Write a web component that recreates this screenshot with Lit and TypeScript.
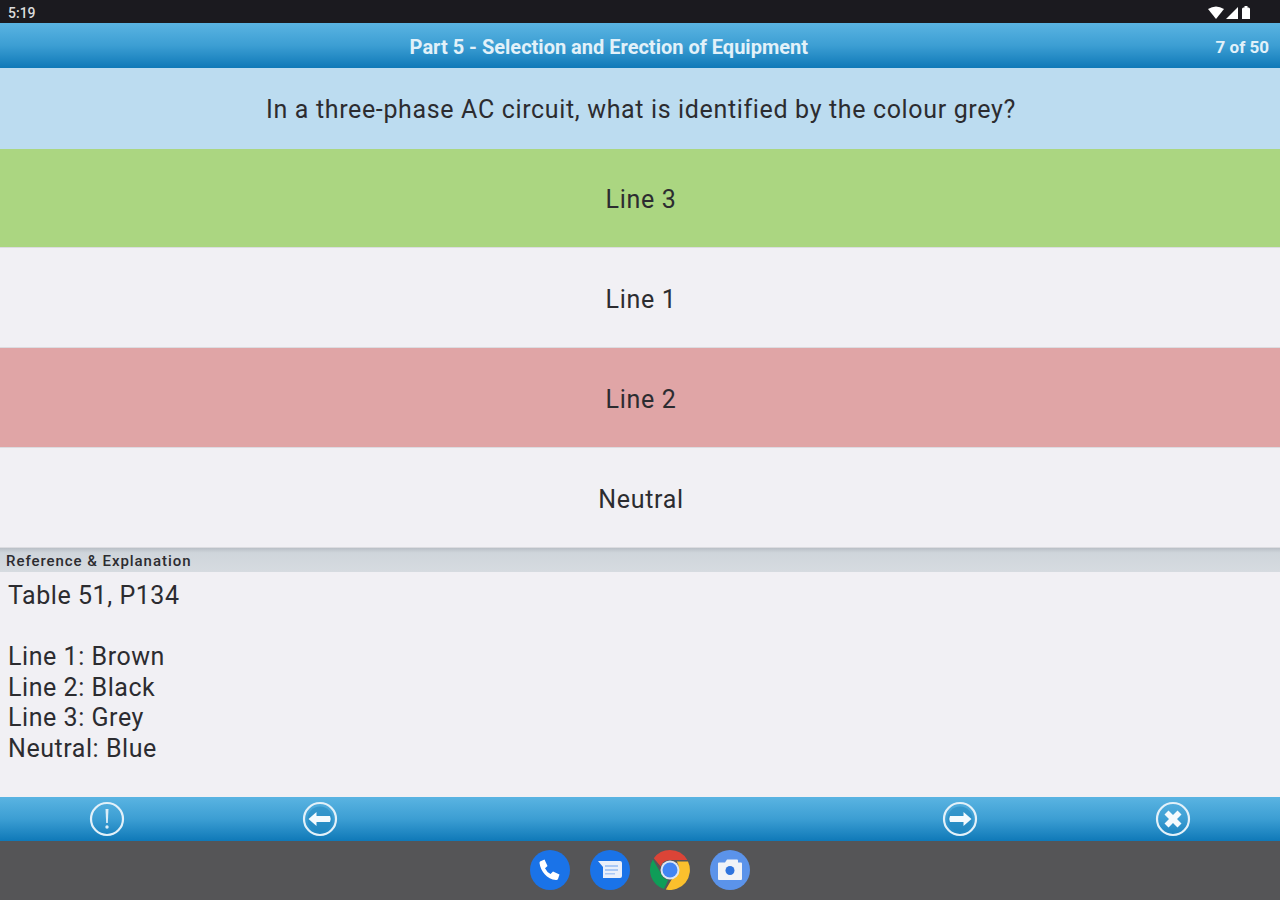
import { LitElement, html, css, svg } from 'lit';
import { customElement } from 'lit/decorators.js';

const answers = [
  { label: 'Line 3', kind: 'correct' },
  { label: 'Line 1', kind: '' },
  { label: 'Line 2', kind: 'wrong' },
  { label: 'Neutral', kind: '' },
];

const toolIcon = (inner: unknown) => html`
  <svg class="tool-icon" viewBox="0 0 36 36" width="36" height="36">
    <circle cx="18" cy="18" r="16" fill="none" stroke="#e3f1f9" stroke-width="2.2"></circle>
    ${inner}
  </svg>
`;

const tools = [
  svg`<path d="M16.500 8h3l-.7 14h-1.600z" fill="#dceef8"></path><circle cx="18" cy="26" r="1.700" fill="#dceef8"></circle>`,
  svg`<circle cx="18" cy="18" r="12.500" fill="#1f86be" opacity=".5"></circle><path d="M6.500 18l8-7v4h13.500q1.500 3 0 6H14.500v4z" fill="#f4fafd"></path>`,
  svg`<circle cx="18" cy="18" r="12.500" fill="#1f86be" opacity=".5"></circle><path d="M29.500 18l-8-7v4H8q-1.500 3 0 6h13.500v4z" fill="#f4fafd"></path>`,
  svg`<path d="M9.500 13.500l4-4 4.500 4.500 4.500-4.500 4 4-4.500 4.500 4.500 4.500-4 4-4.500-4.500-4.500 4.500-4-4 4.500-4.500z" fill="#f4fafd"></path>`,
];

@customElement('app-root')
export class AppRoot extends LitElement {
  static styles = css`
    :host {
      display: block;
      width: 1280px;
      height: 900px;
      font-family: Roboto, 'Liberation Sans', sans-serif;
      color: #2c2c30;
      background: #f1f0f4;
      overflow: hidden;
    }

    .page {
      display: flex;
      flex-direction: column;
      height: 900px;
    }

    .status {
      height: 23px;
      flex: none;
      display: flex;
      align-items: center;
      justify-content: space-between;
      padding: 2px 26px 0 8px;
      box-sizing: border-box;
      background: #1b1a1f;
      color: #dcdcdc;
      font-size: 14px;
      font-weight: 500;
    }

    .status-icons {
      display: block;
    }

    .bar {
      flex: none;
      background: linear-gradient(#5ab4e2, #3c9ed3 50%, #0f79b8);
    }

    .head {
      height: 45px;
      display: grid;
      grid-template-columns: 1fr auto;
      align-items: center;
      color: #e2f1f9;
      font-size: 20px;
      font-weight: 700;
    }

    .head h1 {
      margin: 0;
      padding: 2px 0 0 2px;
      font: inherit;
      text-align: center;
    }

    .head span {
      padding: 2px 11px 0 0;
      font-size: 17px;
    }

    .question {
      height: 81px;
      flex: none;
      display: flex;
      align-items: center;
      justify-content: center;
      padding: 2px 0 0 2px;
      box-sizing: border-box;
      background: #bcdcf0;
      font-size: 25px;
      letter-spacing: 0.65px;
    }

    .answer {
      height: 100px;
      flex: none;
      display: flex;
      align-items: center;
      justify-content: center;
      padding: 4px 0 0 2px;
      box-sizing: border-box;
      border-bottom: 1px solid #dcdce0;
      font-size: 25px;
      letter-spacing: 0.65px;
    }

    .answer.first {
      height: 99px;
      padding-top: 2px;
    }

    .answer.correct {
      background: #abd681;
    }

    .answer.wrong {
      background: #e0a5a6;
    }

    .ref-title {
      height: 24px;
      flex: none;
      display: flex;
      align-items: center;
      padding: 2px 0 0 6px;
      box-sizing: border-box;
      background: linear-gradient(#b9bfc6, #cfd5db 20%, #d6dbe0);
      font-size: 15px;
      font-weight: 500;
      letter-spacing: 0.95px;
    }

    .explain {
      flex: 1;
      padding: 9px 8px 0;
      font-size: 25px;
      letter-spacing: 0.55px;
      line-height: 30.5px;
      white-space: pre-line;
    }

    .tools {
      height: 44px;
      display: flex;
      align-items: center;
    }

    .tool-slot {
      width: 213.3px;
      display: flex;
      justify-content: center;
    }

    .tool-gap {
      flex: 1;
    }

    .tool-icon {
      display: block;
    }

    .nav {
      height: 59px;
      flex: none;
      display: flex;
      align-items: center;
      justify-content: center;
      gap: 20px;
      padding-bottom: 1px;
      box-sizing: border-box;
      background: #555557;
    }

    .nav svg {
      display: block;
    }
  `;

  protected render() {
    return html`
      <div class="page">
        <div class="status">
          <span>5:19</span>
          <svg class="status-icons" width="46" height="16" viewBox="0 0 46 16">
            <path d="M0 4Q8 -1 16 4L8 14z" fill="#fff"></path>
            <path d="M18 14L30 2v12z" fill="#fff"></path>
            <path d="M34 4q0-1.500 1.500-1.500h1V1h3v1.500h1q1.500 0 1.500 1.500v10h-8z" fill="#fff"></path>
          </svg>
        </div>
        <header class="bar head">
          <h1>Part 5 - Selection and Erection of Equipment</h1>
          <span>7 of 50</span>
        </header>
        <div class="question">In a three-phase AC circuit, what is identified by the colour grey?</div>
        ${answers.map(
          (a, i) => html`<div class="answer ${a.kind} ${i === 0 ? 'first' : ''}">${a.label}</div>`
        )}
        <div class="ref-title">Reference &amp; Explanation</div>
        <div class="explain">Table 51, P134

Line 1: Brown
Line 2: Black
Line 3: Grey
Neutral: Blue</div>
        <footer class="bar tools">
          <div class="tool-slot">${toolIcon(tools[0])}</div>
          <div class="tool-slot">${toolIcon(tools[1])}</div>
          <div class="tool-gap"></div>
          <div class="tool-slot">${toolIcon(tools[2])}</div>
          <div class="tool-slot">${toolIcon(tools[3])}</div>
        </footer>
        <nav class="nav">
          <svg width="40" height="40" viewBox="0 0 40 40">
            <circle cx="20" cy="20" r="20" fill="#1a73e8"></circle>
            <path d="M10 11.500l4.500-2 3 6.500-2.500 2.200q1.800 3.800 5.500 5.800l2.500-2.500 6.500 3-1.500 4.500q-.6 1.200-2 1C17 29.500 10.500 21 9.500 13q0-1 .5-1.500z" fill="#fff"></path>
          </svg>
          <svg width="40" height="40" viewBox="0 0 40 40">
            <circle cx="20" cy="20" r="20" fill="#1a73e8"></circle>
            <path d="M8 11h22q2 0 2 2v13q0 2-2 2H13v-11z" fill="#e9effa"></path>
            <path d="M15 15h13v2H15zM15 19h13v2H15zM15 23h10v1.500H15z" fill="#a9c8f5"></path>
          </svg>
          <svg width="40" height="40" viewBox="0 0 40 40">
            <path d="M20 0a20 20 0 0 1 17.320 10H20a10 10 0 0 0-9.300 6.400L3.800 8.200A20 20 0 0 1 20 0z" fill="#db4437"></path>
            <path d="M2.900 9.600l8 13.600a10 10 0 0 0 7.300 6.700l-4.200 9.200A20 20 0 0 1 2.900 9.600z" fill="#0f9d58"></path>
            <path d="M38 11.500A20 20 0 0 1 15.800 39.600l8-13.800a10 10 0 0 0 3-14.300z" fill="#fbc02d"></path>
            <circle cx="20" cy="20" r="9.500" fill="#dfe6f2"></circle>
            <circle cx="20" cy="20" r="7.500" fill="#4285f4"></circle>
          </svg>
          <svg width="40" height="40" viewBox="0 0 40 40">
            <circle cx="20" cy="20" r="20" fill="#5b93ea"></circle>
            <path d="M8 13.500q0-1 1-1h6l2-3h10q1 0 1 1v2h3q1 0 1 1V29q0 1-1 1H9q-1 0-1-1z" fill="#f1f3f7"></path>
            <circle cx="20" cy="20.500" r="4.500" fill="#2f74de"></circle>
          </svg>
        </nav>
      </div>
    `;
  }
}
